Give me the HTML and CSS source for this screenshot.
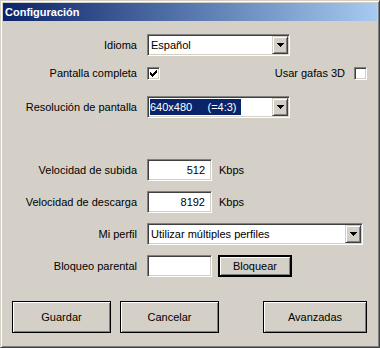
FILE: index.html
```html
<!DOCTYPE html>
<html lang="es">
<head>
  <meta charset="UTF-8">
  <title>Configuración</title>
  <link rel="stylesheet" href="styles.css">
</head>
<body>
  <div class="window">
    <div class="titlebar">Configuración</div>

    <div class="content">
      <div class="row row-idioma">
        <span class="label">Idioma</span>
        <div class="select select-short">
          <span class="value">Español</span>
          <span class="arrow"><svg width="7" height="4" viewBox="0 0 7 4" shape-rendering="crispEdges"><path d="M0 0h7v1h-1v1h-1v1h-1v1h-1v-1h-1v-1h-1v-1h-1z" fill="#000"/></svg></span>
        </div>
      </div>

      <div class="row row-check">
        <span class="label">Pantalla completa</span>
        <span class="checkbox"><svg width="7" height="7" viewBox="0 0 7 7" shape-rendering="crispEdges"><path d="M6 0h1v3h-1v1h-1v1h-1v1h-1v1h-1v-1h-1v-1h-1v-3h1v1h1v1h1v-1h1v-1h1z" fill="#000"/></svg></span>
        <span class="spacer"></span>
        <span class="side-label">Usar gafas 3D</span>
        <span class="checkbox checkbox-last"></span>
      </div>

      <div class="row row-res">
        <span class="label">Resolución de pantalla</span>
        <div class="select select-short">
          <span class="value"><span class="highlight">640x480     (=4:3)</span></span>
          <span class="arrow"><svg width="7" height="4" viewBox="0 0 7 4" shape-rendering="crispEdges"><path d="M0 0h7v1h-1v1h-1v1h-1v1h-1v-1h-1v-1h-1v-1h-1z" fill="#000"/></svg></span>
        </div>
      </div>

      <div class="group">
        <div class="row">
          <span class="label">Velocidad de subida</span>
          <span class="input">512</span>
          <span class="unit">Kbps</span>
        </div>
        <div class="row">
          <span class="label">Velocidad de descarga</span>
          <span class="input">8192</span>
          <span class="unit">Kbps</span>
        </div>
        <div class="row">
          <span class="label">Mi perfil</span>
          <div class="select select-wide">
            <span class="value">Utilizar múltiples perfiles</span>
            <span class="arrow"><svg width="7" height="4" viewBox="0 0 7 4" shape-rendering="crispEdges"><path d="M0 0h7v1h-1v1h-1v1h-1v1h-1v-1h-1v-1h-1v-1h-1z" fill="#000"/></svg></span>
          </div>
        </div>
        <div class="row">
          <span class="label">Bloqueo parental</span>
          <span class="input"></span>
          <button class="btn btn-default">Bloquear</button>
        </div>
      </div>

      <div class="actions">
        <button class="btn btn-big">Guardar</button>
        <button class="btn btn-big">Cancelar</button>
        <button class="btn btn-big btn-adv">Avanzadas</button>
      </div>
    </div>
  </div>
</body>
</html>
```

FILE: styles.css
```css
body {
  margin: 0;
  font-family: "Liberation Sans", Arial, sans-serif;
  font-size: 11px;
  color: #000;
  background: #d4d0c8;
}
.window {
  width: 380px;
  height: 348px;
  box-sizing: border-box;
  padding: 2px;
  background: #d4d0c8;
  border: 1px solid;
  border-color: #d4d0c8 #404040 #404040 #d4d0c8;
  box-shadow: inset 1px 1px #fff, inset -1px -1px #808080;
}
.titlebar {
  height: 18px;
  line-height: 18px;
  padding-left: 2px;
  color: #fff;
  font-weight: bold;
  background: linear-gradient(to right, #0a246a, #a6caf0);
}
.row {
  display: flex;
  align-items: center;
  height: 22px;
}
.row-idioma {
  margin-top: 13px;
}
.row-check {
  margin-top: 6px;
}
.row-res {
  margin-top: 12px;
}
.label {
  width: 134px;
  margin-right: 10px;
  text-align: right;
  white-space: nowrap;
}
.spacer {
  flex: 1;
}
.side-label {
  margin-right: 9px;
}

/* sunken controls */
.select, .input, .checkbox {
  box-sizing: border-box;
  background: #fff;
  border: 1px solid;
  border-color: #808080 #fff #fff #808080;
  box-shadow: inset 1px 1px #404040, inset -1px -1px #d4d0c8;
}
.select {
  display: flex;
  height: 22px;
  padding: 1px;
}
.select-short {
  width: 143px;
}
.select-wide {
  width: 216px;
}
.select .value {
  flex: 1;
  overflow: hidden;
  white-space: nowrap;
  line-height: 18px;
  padding-left: 2px;
}
.highlight {
  display: inline-block;
  margin-left: -1px;
  padding-right: 4px;
  line-height: 16px;
  color: #fff;
  background: #0a246a;
  white-space: pre;
}
.arrow {
  display: flex;
  align-items: center;
  justify-content: center;
  width: 16px;
  height: 18px;
  box-sizing: border-box;
  background: #d4d0c8;
  border: 1px solid;
  border-color: #d4d0c8 #404040 #404040 #d4d0c8;
  box-shadow: inset 1px 1px #fff, inset -1px -1px #808080;
}
.checkbox {
  display: flex;
  align-items: center;
  justify-content: center;
  width: 13px;
  height: 13px;
}
.checkbox-last {
  margin-right: 10px;
}
.input {
  width: 65px;
  height: 22px;
  line-height: 20px;
  padding-right: 6px;
  text-align: right;
}
.unit {
  margin-left: 7px;
}
.group {
  display: flex;
  flex-direction: column;
  gap: 10px;
  margin-top: 41px;
}

/* buttons */
.btn {
  box-sizing: border-box;
  font-family: "Liberation Sans", Arial, sans-serif;
  font-size: 11px;
  color: #000;
  background: #d4d0c8;
  border: 1px solid #000;
  box-shadow: inset 1px 1px #fff, inset -1px -1px #808080;
  padding: 0;
  margin: 0;
}
.btn-default {
  width: 74px;
  height: 22px;
  margin-left: 6px;
  border-width: 2px;
}
.actions {
  display: flex;
  gap: 9px;
  margin-top: 24px;
  padding: 0 10px 0 9px;
}
.btn-big {
  width: 99px;
  height: 32px;
}
.btn-adv {
  width: 104px;
  margin-left: auto;
}
```
